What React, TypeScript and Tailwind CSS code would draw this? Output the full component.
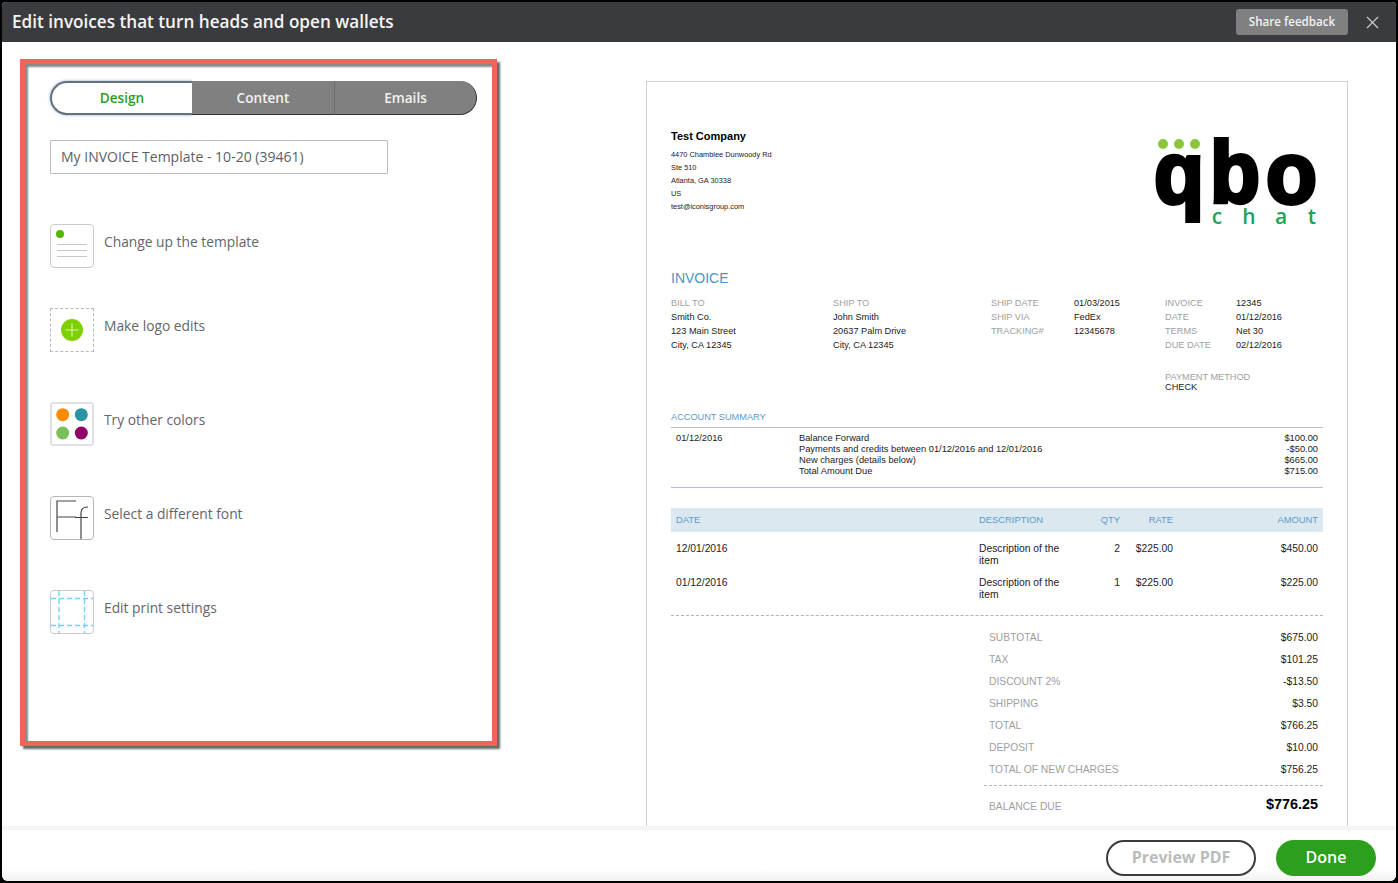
import React from 'react';
import { X } from 'lucide-react';

const sidebarFont = "font-['Open_Sans',sans-serif]";
const paperFont = "font-['Liberation_Sans',Arial,sans-serif]";

const Logo = () => (
  <svg width="168" height="95" viewBox="0 0 168 95" className="mt-[4px]">
    <circle cx="8" cy="11" r="5" fill="#8cc63f" />
    <circle cx="24" cy="11" r="5" fill="#8cc63f" />
    <circle cx="40" cy="11" r="5" fill="#8cc63f" />
    <g fontFamily="'Liberation Sans', sans-serif" fontWeight="700" fontSize="88" fill="#000" stroke="#000" strokeWidth="4">
      <text x="-1" y="70" textLength="50" lengthAdjust="spacingAndGlyphs">q</text>
      <text x="55" y="69" textLength="50" lengthAdjust="spacingAndGlyphs">b</text>
      <text x="111" y="70" textLength="51" lengthAdjust="spacingAndGlyphs">o</text>
    </g>
    <g fontFamily="'Open Sans', sans-serif" fontWeight="600" fontSize="21" fill="#1fa35a" textAnchor="middle">
      <text x="62" y="91">c</text>
      <text x="94" y="91">h</text>
      <text x="126" y="91">a</text>
      <text x="157" y="91">t</text>
    </g>
  </svg>
);

const TemplateIcon = () => (
  <svg width="44" height="44" viewBox="0 0 42 42" className="rounded-sm border border-[#c8ccd0] shrink-0">
    <circle cx="9" cy="9" r="4" fill="#53b700" />
    <path d="M6 19.5h30M6 25.5h30M6 31.5h30" stroke="#c4c6c9" strokeWidth="1" />
  </svg>
);

const LogoIcon = () => (
  <svg width="44" height="44" viewBox="0 0 42 42" className="border border-dashed border-[#b5b7ba] shrink-0">
    <circle cx="21" cy="21" r="11" fill="#7fd000" />
    <path d="M21 14.5v13M14.5 21h13" stroke="#d8f5a8" strokeWidth="1.2" />
  </svg>
);

const ColorsIcon = () => (
  <svg width="44" height="44" viewBox="0 0 40 40" className="rounded-[3px] border-2 border-[#dfe1e6] shrink-0">
    <circle cx="10.7" cy="10.7" r="6.5" fill="#ff8c00" />
    <circle cx="29.3" cy="10.7" r="6.5" fill="#2a93a5" />
    <circle cx="10.7" cy="29" r="6.5" fill="#7cc05c" />
    <circle cx="29.3" cy="29" r="6.5" fill="#900068" />
  </svg>
);

const FontIcon = () => (
  <svg width="44" height="44" viewBox="0 0 42 42" className="rounded-sm border border-[#b5b7ba] shrink-0" fill="none">
    <path d="M6 35V4h19M6 20h19" stroke="#444" strokeWidth="1.2" />
    <path d="M30 43V16q0-6 7-6M24 20.5h13" stroke="#444" strokeWidth="1.2" />
  </svg>
);

const PrintIcon = () => (
  <svg width="44" height="44" viewBox="0 0 42 42" className="rounded-sm border border-[#c8ccd0] shrink-0" fill="none">
    <path d="M0 7.5h42M0 34.5h42M8 0v42M33.5 0v42" stroke="#6fd2ff" strokeWidth="1.4" strokeDasharray="5 3" />
  </svg>
);

const settings = [
  { label: 'Change up the template', icon: <TemplateIcon />, spacing: 'mt-[50px]' },
  { label: 'Make logo edits', icon: <LogoIcon />, spacing: 'mt-[40px]' },
  { label: 'Try other colors', icon: <ColorsIcon />, spacing: 'mt-[50px]' },
  { label: 'Select a different font', icon: <FontIcon />, spacing: 'mt-[50px]' },
  { label: 'Edit print settings', icon: <PrintIcon />, spacing: 'mt-[50px]' },
];

const addressLines = ['4470 Chamblee Dunwoody Rd', 'Ste 510', 'Atlanta, GA 30338', 'US', 'test@iconisgroup.com'];

const summaryRows = [
  { text: 'Balance Forward', amount: '$100.00' },
  { text: 'Payments and credits between 01/12/2016 and 12/01/2016', amount: '-$50.00' },
  { text: 'New charges (details below)', amount: '$665.00' },
  { text: 'Total Amount Due', amount: '$715.00' },
];

const lineItems = [
  { date: '12/01/2016', qty: '2', rate: '$225.00', amount: '$450.00' },
  { date: '01/12/2016', qty: '1', rate: '$225.00', amount: '$225.00' },
];

const totals = [
  ['SUBTOTAL', '$675.00'],
  ['TAX', '$101.25'],
  ['DISCOUNT 2%', '-$13.50'],
  ['SHIPPING', '$3.50'],
  ['TOTAL', '$766.25'],
  ['DEPOSIT', '$10.00'],
  ['TOTAL OF NEW CHARGES', '$756.25'],
];

const Sidebar = () => (
  <div className={`ml-[18px] mt-[17px] w-[477px] h-[687px] shrink-0 border-[5px] border-[#f0645a] pl-[25px] pr-[15px] pt-[17px] shadow-[3px_3px_2px_#666,inset_3px_3px_2px_#888] ${sidebarFont}`}>
    <div className="flex h-[34px] w-[427px] text-[13.6px] font-semibold text-[#f2f2f2]">
      <div className="w-[142px] flex items-center justify-center rounded-l-[17px] bg-white text-[#2ca01c] border-2 border-r-0 border-[#6b6f76] shadow-[0_0_3px_#7aa7e0]">Design</div>
      <div className="w-[143px] flex items-center justify-center pt-[2px] bg-[#808080] border-b border-[#333] border-r border-r-[#6e6e6e]">Content</div>
      <div className="w-[142px] flex items-center justify-center pt-[2px] rounded-r-[17px] bg-[#808080] border-b border-r border-[#333]">Emails</div>
    </div>
    <div className="mt-[25px] w-[338px] h-[34px] border border-[#b9bbbe] rounded-[1px] flex items-center pl-[10px] pb-[2px] text-[14px] text-[#5c5f63]">
      My INVOICE Template - 10-20 (39461)
    </div>
    {settings.map((item) => (
      <div key={item.label} className={`flex items-start gap-[10px] ${item.spacing}`}>
        {item.icon}
        <span className="mt-[8px] text-[13.8px] leading-[20px] text-[#63666a]">{item.label}</span>
      </div>
    ))}
  </div>
);

const Invoice = () => (
  <div className={`ml-[149px] mt-[39px] w-[702px] shrink-0 h-[745px] overflow-hidden border border-b-0 border-[#cfcfcf] px-[24px] pt-[47px] text-[9.2px] text-[#222] ${paperFont}`}>
    <div className="flex justify-between items-start">
      <div>
        <div className="text-[11px] leading-[14px] font-bold text-black">Test Company</div>
        <div className="mt-[5px] text-[7.4px] leading-[13px]">
          {addressLines.map((line) => (
            <div key={line}>{line}</div>
          ))}
        </div>
      </div>
      <Logo />
    </div>

    <div className="mt-[41px] text-[14px] leading-[18px] text-[#4f94c4]">INVOICE</div>

    <div className="mt-[9px] grid grid-cols-[162px_158px_83px_91px_71px_1fr] leading-[14px]">
      <div>
        <div className="text-[#a0a0a0]">BILL TO</div>
        <div>Smith Co.</div>
        <div>123 Main Street</div>
        <div>City, CA 12345</div>
      </div>
      <div>
        <div className="text-[#a0a0a0]">SHIP TO</div>
        <div>John Smith</div>
        <div>20637 Palm Drive</div>
        <div>City, CA 12345</div>
      </div>
      <div className="text-[#a0a0a0]">
        <div>SHIP DATE</div>
        <div>SHIP VIA</div>
        <div>TRACKING#</div>
      </div>
      <div>
        <div>01/03/2015</div>
        <div>FedEx</div>
        <div>12345678</div>
      </div>
      <div>
        <div className="text-[#a0a0a0]">
          <div>INVOICE</div>
          <div>DATE</div>
          <div>TERMS</div>
          <div>DUE DATE</div>
        </div>
        <div className="mt-[20px] leading-[10px] whitespace-nowrap">
          <div className="text-[#a0a0a0]">PAYMENT METHOD</div>
          <div>CHECK</div>
        </div>
      </div>
      <div>
        <div>12345</div>
        <div>01/12/2016</div>
        <div>Net 30</div>
        <div>02/12/2016</div>
      </div>
    </div>

    <div className="mt-[19px] pb-[4px] border-b border-[#b8c0c8] text-[9.2px] leading-[12px] text-[#5b9bc8]">ACCOUNT SUMMARY</div>
    <div className="grid grid-cols-[123px_1fr_auto] px-[5px] pt-[5px] pb-[10px] border-b border-[#b8c0c8] leading-[11px] text-[9.3px]">
      <div>01/12/2016</div>
      <div>
        {summaryRows.map((row) => (
          <div key={row.text}>{row.text}</div>
        ))}
      </div>
      <div className="text-right">
        {summaryRows.map((row) => (
          <div key={row.text}>{row.amount}</div>
        ))}
      </div>
    </div>

    <div className="mt-[20px] h-[24px] px-[5px] bg-[#dce8f0] text-[9.4px] text-[#5b9bc8] grid grid-cols-[303px_100px_41px_53px_1fr] items-center">
      <div>DATE</div>
      <div>DESCRIPTION</div>
      <div className="text-right">QTY</div>
      <div className="text-right">RATE</div>
      <div className="text-right">AMOUNT</div>
    </div>
    <div className="pt-[11px] pb-[14px] border-b border-dashed border-[#b0b4ba] flex flex-col gap-[10px] text-[10.3px]">
      {lineItems.map((item) => (
        <div key={item.date} className="px-[5px] grid grid-cols-[303px_100px_41px_53px_1fr] leading-[12px]">
          <div>{item.date}</div>
          <div className="w-[90px]">Description of the item</div>
          <div className="text-right">{item.qty}</div>
          <div className="text-right">{item.rate}</div>
          <div className="text-right">{item.amount}</div>
        </div>
      ))}
    </div>

    <div className="ml-[313px] mt-[11px] text-[10.3px]">
      {totals.map(([label, value]) => (
        <div key={label} className="flex justify-between h-[22px] items-center px-[5px]">
          <span className="text-[#a0a0a0]">{label}</span>
          <span>{value}</span>
        </div>
      ))}
      <div className="mt-[4px] pt-[9px] border-t border-dashed border-[#b0b4ba] flex justify-between px-[5px]">
        <span className="mt-[4px] text-[#a0a0a0]">BALANCE DUE</span>
        <span className="text-[14.4px] leading-[18px] font-bold text-black">$776.25</span>
      </div>
    </div>
  </div>
);

export default function App() {
  return (
    <div className="w-[1398px] h-[883px] bg-black p-[2px] overflow-hidden">
      <div className="w-[1394px] h-[879px] bg-white flex flex-col rounded-b-[6px] rounded-t-[4px] overflow-hidden">
        <header className={`h-[40px] shrink-0 bg-[#3a3b3f] flex items-center justify-between pl-[10px] pr-[13px] ${sidebarFont}`}>
          <h1 className="text-[17.15px] font-semibold text-[#f4f4f4]">Edit invoices that turn heads and open wallets</h1>
          <div className="flex items-center gap-[14px]">
            <button className="w-[112px] h-[26px] rounded-[3px] bg-[#808080] text-[11.6px] font-semibold text-[#f2f2f2]">Share feedback</button>
            <X size={21} strokeWidth={1.3} className="text-[#cfcfcf]" />
          </div>
        </header>

        <main className="h-[784px] shrink-0 flex overflow-hidden">
          <Sidebar />
          <Invoice />
        </main>

        <div className="h-[4px] shrink-0 bg-[#f4f5f8]" />
        <footer className={`flex-1 flex items-center justify-end gap-[20px] pr-[20px] pt-[4px] bg-[linear-gradient(180deg,#ffffff_75%,#f2f2f2_100%)] ${sidebarFont}`}>
          <button className="w-[150px] h-[36px] pb-[2px] rounded-[18px] border-2 border-[#3c3c3c] bg-white text-[16px] font-bold text-[#bbbbbb]">Preview PDF</button>
          <button className="w-[100px] h-[36px] pb-[2px] rounded-[18px] bg-[#2ca01c] text-[16px] font-semibold text-white">Done</button>
        </footer>
      </div>
    </div>
  );
}
